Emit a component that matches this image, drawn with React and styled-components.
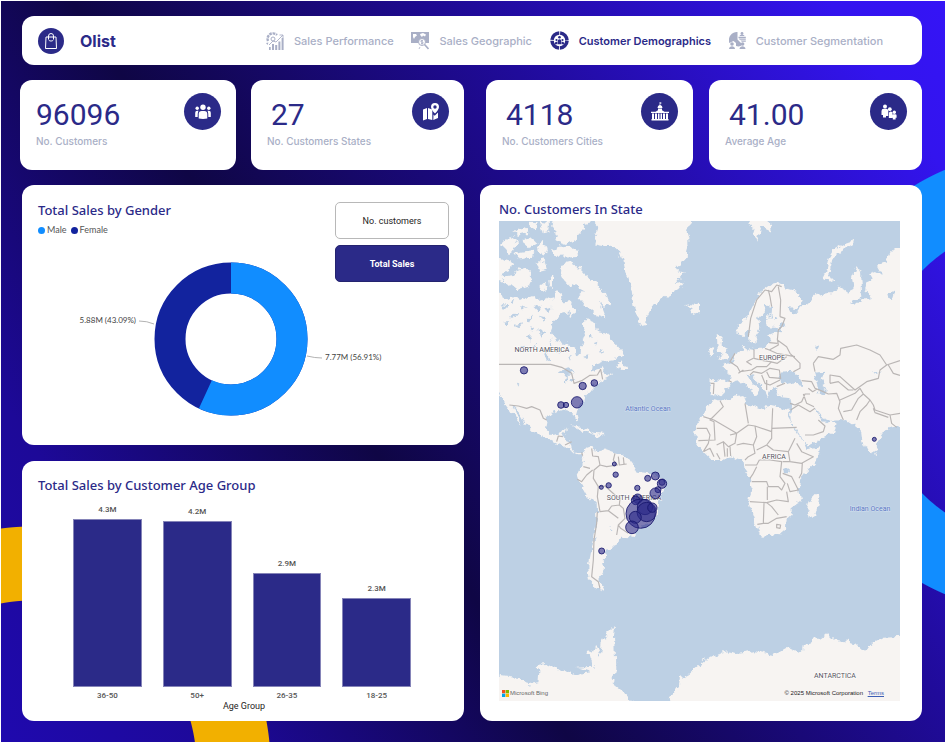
import React, { useState } from "react";
import styled, { createGlobalStyle } from "styled-components";

const navy = "#2b2a88";
const muted = "#a9afc6";

const GlobalStyle = createGlobalStyle`
  * { box-sizing: border-box; }
  body { margin: 0; background: #fff; font-family: Roboto, "Liberation Sans", sans-serif; }
  h1, h2, p, ul { margin: 0; padding: 0; }
`;

const Page = styled.main`
  display: flex;
  flex-direction: column;
  margin: 1px 1px 2px;
  padding: 15px 23px 21px 21px;
  min-height: calc(100vh - 3px);
  background:
    radial-gradient(circle at calc(100% + 90px) 381px, transparent 158px, #118dff 159px, #118dff 230px, transparent 231px),
    radial-gradient(circle at 31px calc(100% + 23px), transparent 164px, #f2b000 165px, #f2b000 238px, transparent 239px),
    linear-gradient(56deg, #1f09ae 0%, #1d0998 16%, #0f0645 39.5%, #200b9a 67%, #3314ee 92%, #3514f6 100%);
`;

const Header = styled.header`
  display: flex;
  align-items: center;
  justify-content: space-between;
  min-height: 49px;
  margin-bottom: 15px;
  padding: 0 39px 0 16px;
  border-radius: 12px;
  background: #fff;
`;

const Brand = styled.div`
  display: flex;
  align-items: center;
  gap: 16px;
`;

const BrandName = styled.h1`
  font: 700 16px/24px Inter, sans-serif;
  color: ${navy};
`;

const Disc = styled.span`
  display: grid;
  place-items: center;
  flex: none;
  width: ${(p) => p.$size}px;
  height: ${(p) => p.$size}px;
  border-radius: 50%;
  background: ${navy};
`;

const Nav = styled.nav`
  display: flex;
  justify-content: space-between;
  flex: 0 1 617px;
`;

const NavLink = styled.a`
  display: flex;
  align-items: center;
  gap: 10px;
  font: ${(p) => (p.$active ? 600 : 500)} 11px/18px Inter, sans-serif;
  color: ${(p) => (p.$active ? navy : muted)};
  text-decoration: none;
  white-space: nowrap;
`;

const Columns = styled.div`
  display: grid;
  grid-template-columns: 1fr 1fr;
  column-gap: 16px;
  flex: ${(p) => (p.$grow ? 1 : "none")};
`;

const StatPair = styled.div`
  display: grid;
  grid-template-columns: ${(p) => p.$columns};
  gap: ${(p) => p.$gap}px;
  margin: 0 0 15px ${(p) => p.$shift}px;
`;

const StatCard = styled.section`
  display: flex;
  justify-content: space-between;
  align-items: flex-start;
  min-height: 90px;
  padding: 13px 15px 13px 16px;
  border-radius: 12px;
  background: #fff;
`;

const StatText = styled.div`
  display: flex;
  flex-direction: column;
  gap: 1px;
  padding-top: 4px;
`;

const StatValue = styled.p`
  padding-left: ${(p) => p.$indent}px;
  font-size: 30px;
  line-height: 36px;
  color: ${navy};
`;

const StatLabel = styled.h2`
  font: 500 10px/14px Inter, sans-serif;
  color: ${muted};
  white-space: nowrap;
`;

const Stack = styled.div`
  display: grid;
  grid-template-rows: 1fr 1fr;
  gap: 16px;
`;

const Panel = styled.section`
  display: flex;
  flex-direction: column;
  min-height: 260px;
  padding: ${(p) => p.$pad || "16px"};
  border-radius: 12px;
  background: #fff;
`;

const GenderPanel = styled.section`
  display: grid;
  min-height: 260px;
  border-radius: 12px;
  background: #fff;
  & > * { grid-area: 1 / 1; }
`;

const PanelTitle = styled.h2`
  font: 500 13px/16px "Noto Sans", "Open Sans", sans-serif;
  color: ${navy};
`;

const GenderTop = styled.div`
  display: flex;
  justify-content: space-between;
  align-items: flex-start;
  align-self: start;
  padding: 17px 15px 0 16px;
  z-index: 1;
`;

const Legend = styled.ul`
  display: flex;
  gap: 4px;
  margin-top: 5px;
  list-style: none;
`;

const LegendItem = styled.li`
  display: flex;
  align-items: center;
  gap: 2px;
  font: 400 9px/14px Lato, sans-serif;
  color: #555;
  &::before {
    content: "";
    width: 7px;
    height: 7px;
    border-radius: 50%;
    background: ${(p) => p.$color};
  }
`;

const Toggles = styled.div`
  display: flex;
  flex-direction: column;
  gap: 6px;
`;

const Toggle = styled.button`
  width: 114px;
  height: 37px;
  padding: 0;
  border: 1px solid ${(p) => (p.$active ? "#24236f" : "#b8b8b8")};
  border-radius: 5px;
  background: ${(p) => (p.$active ? navy : "#fff")};
  color: ${(p) => (p.$active ? "#fff" : "#252423")};
  font: ${(p) => (p.$active ? 700 : 400)} 9px/12px Roboto, sans-serif;
  cursor: pointer;
`;

const Chart = styled.svg`
  display: block;
  width: 100%;
  height: auto;
`;

const Plot = styled.div`
  display: grid;
  grid-template-columns: repeat(4, 1fr);
  gap: 21px;
  flex: 1;
  padding: 12px 37px 0 35px;
`;

const BarColumn = styled.div`
  display: flex;
  flex-direction: column;
  align-items: stretch;
  text-align: center;
  font: 500 8px/12px Roboto, sans-serif;
  color: #555;
`;

const BarTrack = styled.div`
  display: flex;
  flex-direction: column;
  justify-content: flex-end;
  flex: 1;
  padding-top: 14px;
  margin-bottom: 3px;
`;

const BarArea = styled.div`
  display: flex;
  flex-direction: column;
  justify-content: flex-end;
  height: 100%;
`;

const BarValue = styled.span`
  margin: -15px 0 3px;
`;

const Bar = styled.div`
  border: 1px solid #8584b8;
  background: ${navy};
`;

const AxisTitle = styled.p`
  padding-left: 2px;
  text-align: center;
  font-size: 9px;
  line-height: 8px;
  color: #252423;
`;

const MapLabel = styled.text`
  font: 400 7px Roboto, sans-serif;
  fill: ${(p) => (p.$ocean ? "#5b78c4" : "#55525c")};
  stroke: ${(p) => (p.$ocean ? "#d3e0ef" : "#fff")};
  stroke-width: 1px;
  paint-order: stroke;
`;

const MapFrame = styled.figure`
  display: grid;
  margin: 4px 0 0;
  & > * { grid-area: 1 / 1; }
`;

const MapFooter = styled.figcaption`
  display: flex;
  align-items: center;
  justify-content: space-between;
  align-self: end;
  padding: 0 16px 3px 3px;
  font: 400 6px/10px "Liberation Sans", sans-serif;
  color: #222;
  a { margin-left: 3px; color: #3d5fb5; }
`;

const Bing = styled.span`
  display: flex;
  align-items: center;
  gap: 1px;
  color: #666;
`;

/* ---------- icons ---------- */

const BagIcon = () => (
  <svg width="16" height="18" viewBox="0 0 16 18" fill="none" stroke="#fff" strokeWidth="1" aria-hidden="true">
    <path d="M3 5h10l.5 11.500h-11z" />
    <path d="M5.500 7V4a2.500 2.500 0 0 1 5 0v3M5.500 7.500c.5 2 4.500 2 5 0" />
  </svg>
);

const PerformanceIcon = () => (
  <svg width="18" height="18" viewBox="0 0 18 18" fill="currentColor" aria-hidden="true">
    <path d="M2 9a5.500 5.500 0 0 1 9-6" fill="none" stroke="currentColor" strokeWidth="2.400" strokeDasharray="2.600 .8" />
    <path d="m3 13 4-4 3 1 7-7M13.500 3H17v3" fill="none" stroke="currentColor" strokeWidth=".9" />
    <circle cx="7" cy="7" r="2" fill="none" stroke="currentColor" />
    <path d="M3 15h1.700v3H3zM6 12h2v6H6zM9.200 13h2v5h-2zM12.400 9.500h2V18h-2zM15.600 6h2v12h-2zM0 11l2.500-.5-1 2.500z" />
  </svg>
);

const GeographicIcon = () => (
  <svg width="18" height="18" viewBox="0 0 18 18" aria-hidden="true">
    <path d="M0 0h18v11h-3a4 4 0 0 0-7-1l-1 1H0z" fill="currentColor" />
    <path d="M2 2h3l1 1.500-2 1.500-1 2-1-2zM9 2l3-1 3 1.500-1 2-2-1-1 1.500-1.500-1.500z" fill="#fff" />
    <circle cx="11" cy="10" r="3.500" fill="#fff" stroke="currentColor" />
    <path d="m13.500 12.500 4 4.500" stroke="currentColor" strokeWidth="1.600" />
    <path d="M12 8.500h-2v1.500h2v1.500h-2M11 7.800v5M9 15l-1 2" fill="none" stroke="currentColor" strokeWidth=".8" />
  </svg>
);

const DemographicsIcon = () => (
  <svg width="19" height="19" viewBox="0 0 19 19" fill="currentColor" aria-hidden="true">
    <circle cx="9.500" cy="9.500" r="7.500" fill="none" stroke="currentColor" strokeWidth="3.600" strokeDasharray="10.900 .88" strokeDashoffset="-.44" />
    <circle cx="9.500" cy="6.300" r="1.300" />
    <circle cx="6.500" cy="9" r="1.100" />
    <circle cx="12.500" cy="9" r="1.100" />
    <path d="M7.700 10.300a1.800 2 0 0 1 3.600 0v3H7.700zM4.800 12.700a1.700 2 0 0 1 2.500-1.800v2.400H5zM14.200 12.700a1.700 2 0 0 0-2.500-1.800v2.400H14z" />
  </svg>
);

const SegmentationIcon = () => (
  <svg width="17" height="17" viewBox="0 0 17 17" fill="currentColor" aria-hidden="true">
    <path d="M8.500 0v7.500l5 5A6 6 0 0 1 7 14V11L4.500 9 .3 11A8.300 8.300 0 0 1 8.500 0zM9.500 4.700h7.300v1.200H9.500zM9.500 6.500h7.300v1.300h-6zM11.500 8.500h5.300v1.200h-4z" />
    <circle cx="13" cy="1.500" r="1.400" />
    <path d="M10.500 4c.2-1.800 4.800-1.800 5 0z" />
    <circle cx="3" cy="12" r="1.800" />
    <path d="M0 17c.2-3.700 5.800-3.700 6 0z" />
    <circle cx="13.600" cy="12" r="1.800" />
    <path d="M10.500 17c.2-3.700 5.800-3.700 6 0z" />
  </svg>
);

const GroupIcon = () => (
  <svg width="18" height="16" viewBox="0 0 18 16" fill="#fff" aria-hidden="true">
    <circle cx="9" cy="3.200" r="2.700" />
    <circle cx="3.200" cy="4.200" r="1.700" />
    <circle cx="14.800" cy="4.200" r="1.700" />
    <path d="M4.700 14.500v-4.500q0-3 3-3h2.600q3 0 3 3v4.500q-4.300.8-8.600 0zM1.200 13V8.700q0-2 2-2h1.300Q3.600 8 3.700 13zM16.800 13V8.700q0-2-2-2h-1.300q.9 1.300.8 6.300z" />
  </svg>
);

const MapPinIcon = () => (
  <svg width="18" height="18" viewBox="0 0 18 18" fill="#fff" aria-hidden="true">
    <path d="M1 6.500 5 5v11l-4 1.500zM6 5l4.300 1.500V17L6 16zM11.500 11.500l1.200 1.300 3.300-3.300V15l-4.700 2z" />
    <path fillRule="evenodd" d="M13 0a4 4 0 0 1 4 4c0 2-2 4.500-4 6.500C11 8.500 9 6 9 4a4 4 0 0 1 4-4zm0 2.300a1.700 1.700 0 1 0 0 3.400 1.700 1.700 0 0 0 0-3.400z" />
  </svg>
);

const CityHallIcon = () => (
  <svg width="18" height="20" viewBox="0 0 18 20" fill="#fff" aria-hidden="true">
    <path d="M8.600 0 11 1 9.300 1.800V3Q11.500 3.500 11.500 6h-5q0-2.500 2.100-3zM7 6.600h4v1.600l2.500 1.600H18V11H0V9.800h4.500L7 8.200zM1 11.500h2V17H1zM4 11.500h2V17H4zM7 11.500h1.500V17H7zM9.500 11.500H11V17H9.500zM12 11.500h2V17h-2zM15 11.500h2V17h-2zM.5 17h17v1.500H.5z" />
  </svg>
);

const FamilyIcon = () => (
  <svg width="18" height="18" viewBox="0 0 18 18" fill="#fff" aria-hidden="true">
    <circle cx="5" cy="3.500" r="2" />
    <path d="M1.500 8q0-2.300 2.300-2.300h2.500Q8 5.700 8.300 8v5H6v1.500H3V12H1.500z" />
    <circle cx="9.800" cy="6.200" r="1.900" />
    <path d="M9 10q0-1.500 1.700-1.500 1.800 0 1.800 1.500V15H8.800z" />
    <circle cx="14.300" cy="9.200" r="1.700" />
    <path d="M12 12.500q0-1.300 1.500-1.300h1.800q1.300 0 1.300 1.300v2.300h-1v1.700h-2.800v-1.700H12z" />
  </svg>
);

const BingLogo = () => (
  <svg width="7" height="7" viewBox="0 0 7 7" aria-hidden="true">
    <path d="M0 0h3.300v3.300H0z" fill="#f25022" />
    <path d="M3.700 0H7v3.300H3.700z" fill="#7fba00" />
    <path d="M0 3.700h3.300V7H0z" fill="#00a4ef" />
    <path d="M3.700 3.700H7V7H3.700z" fill="#ffb900" />
  </svg>
);

/* ---------- world map ---------- */

const land = [
  // North and Central America
  "M10 300 50 325 75 318 100 330 130 318 150 330 175 322 190 332 200 300 215 310 222 340 245 335 240 365 215 372 190 392 183 430 200 450 235 462 255 475 262 502 272 490 275 460 285 430 275 400 290 388 318 400 325 425 345 430 365 450 385 470 398 490 375 510 340 515 310 528 300 545 335 535 348 562 375 545 350 566 320 580 300 600 287 615 282 638 262 655 258 670 264 692 255 686 246 666 215 662 185 672 170 690 165 715 185 735 215 730 228 712 224 732 215 745 240 755 245 775 255 788 275 788 278 796 262 792 240 780 215 765 195 755 165 740 130 725 105 700 85 665 65 645 78 670 98 708 80 690 55 650 40 630 27 605 10 590Z",
  "M10 200 65 215 58 240 35 250 40 265 75 260 85 232 110 240 128 262 115 290 85 300 60 280 10 262Z",
  "M30 165 60 135 85 150 72 180 55 195 45 180ZM70 125 105 112 112 128 85 135ZM95 150 125 145 140 160 120 172ZM118 98 140 100 138 118 120 114ZM150 95 180 100 178 125 158 130ZM70 192 130 182 125 200 90 205ZM142 170 160 155 170 175 160 200ZM140 215 165 210 170 240 150 245ZM175 265 190 260 188 292 177 285ZM148 290 165 275 172 300 155 305Z",
  "M190 80H305L268 128 258 152 225 162 190 150 200 125 183 108ZM183 178 215 168 262 176 264 198 205 200ZM212 222 240 215 262 228 282 250 312 275 347 310 360 345 338 350 326 332 347 388 320 378 282 345 262 320 285 300 252 282 240 290 222 270 210 245ZM232 350 245 345 262 362 240 378ZM380 530 394 508 413 540 395 540ZM243 705 275 712 310 728 285 726ZM310 728 345 732 330 740 305 736Z",
  // Greenland and Iceland
  "M295 80 325 110 315 140 310 160 340 165 365 165 385 185 400 210 405 240 415 275 425 300 430 345 440 385 455 408 468 405 472 375 485 350 500 345 530 318 565 297 582 275 552 285 585 245 555 240 590 200 596 160 590 130 604 80ZM585 345 605 355 598 365 615 377 632 360 625 345 605 343Z",
  // Europe and Asia
  "M1250 170 1205 185 1190 215 1160 225 1178 258 1155 240 1140 245 1152 268 1130 275 1125 302 1147 322 1120 325 1105 342 1080 335 1108 325 1116 300 1113 240 1095 230 1085 262 1090 290 1080 310 1060 295 1045 290 1035 310 1010 310 980 315 960 332 940 345 920 368 905 370 890 350 920 355 938 335 930 315 905 300 885 295 870 277 845 280 825 295 805 310 790 345 770 385 745 405 740 430 760 435 775 420 780 455 795 462 801 435 808 410 805 385 820 365 825 345 847 350 845 370 830 385 835 412 865 415 882 400 886 410 860 425 835 435 845 455 830 460 825 475 795 478 780 475 765 480 760 462 755 480 740 490 725 512 695 525 705 545 720 550 716 572 690 572 662 570 660 612 675 622 695 615 715 590 740 575 760 572 770 590 800 615 810 600 780 570 768 550 787 557 812 582 825 600 835 622 845 597 862 590 860 610 875 622 902 625 906 655 900 672 902 690 920 720 942 755 955 768 990 750 1030 728 1040 704 1020 690 1005 700 990 680 975 652 1000 682 1025 692 1070 690 1085 700 1100 698 1096 712 1115 720 1120 755 1135 785 1142 790 1158 780 1163 755 1180 730 1200 710 1250 702Z",
  "M680 435 695 440 692 460 710 480 716 500 685 510 694 492 683 475ZM658 480 670 470 676 490 660 500ZM1092 148 1070 155 1030 180 1015 205 1008 240 998 262 1022 276 1030 270 1018 250 1026 215 1042 190 1072 172 1090 162ZM775 80H838L842 122 815 110 802 155 790 120ZM1154 785 1162 800 1158 800Z",
  // Africa and Madagascar
  "M675 627 690 632 730 620 760 615 770 640 795 650 820 660 830 645 860 652 895 660 894 682 916 720 940 755 950 778 992 772 980 810 955 840 930 870 927 895 933 930 905 950 905 975 890 990 888 1015 865 1035 815 1040 800 1000 777 935 785 895 780 868 765 845 760 812 740 805 725 798 690 810 665 810 640 785 618 758 615 710 635 680 658 640ZM982 910 988 925 975 975 960 985 952 960 958 935Z",
  // South America
  "M275 795 290 775 310 768 308 785 340 778 375 790 415 805 430 825 440 842 470 845 500 858 525 880 520 905 505 930 500 980 480 1000 450 1012 432 1030 415 1042 390 1040 385 1060 365 1075 345 1085 350 1100 335 1120 345 1135 325 1170 342 1203 320 1195 300 1170 295 1130 305 1080 315 1030 322 980 320 940 290 915 265 870 260 855 270 835 280 810Z",
  // Antarctica
  "M10 1455 60 1462 95 1465 110 1485 145 1480 148 1445 137 1425 170 1422 200 1435 230 1445 260 1457 275 1450 300 1447 262 1433 308 1430 305 1410 290 1390 320 1372 330 1400 335 1360 355 1325 375 1305 372 1340 376 1430 368 1480 400 1505 445 1555H10ZM520 1555 565 1495 570 1465 600 1450 660 1400 710 1387 740 1392 795 1383 850 1395 895 1370 925 1385 960 1355 990 1345 1010 1328 1030 1348 1095 1360 1125 1385 1150 1355 1180 1340 1250 1337V1555Z",
];

const water = [
  "M868 548 905 545 930 560 942 585 900 580 870 586ZM972 545 1005 542 995 570 1010 600 1004 618 985 610 980 575ZM205 545 232 535 255 548 230 552 232 580 222 575 225 552ZM240 560 262 572 245 580ZM157 478 165 480 182 515 170 510ZM107 440 122 435 118 455ZM60 378 90 368 75 385ZM35 345 55 350 45 360ZM880 838 895 832 898 850 882 850ZM1195 310 1215 305 1208 328 1198 325ZM975 465 990 462 982 480ZM1145 545 1180 540 1160 548ZM90 345 110 350 100 358ZM110 385 130 375 120 395ZM145 415 168 425 150 440ZM130 350 155 348 142 362ZM40 395 65 392 50 405ZM355 1012 365 1015 360 1018ZM300 430 312 445 300 450ZM330 475 345 480 332 485ZM840 378 850 372 846 384ZM858 375 865 382 858 390Z",
  "M165 355 185 350 172 366ZM75 405 98 400 85 415ZM150 380 168 385 158 395ZM130 465 142 462 138 480ZM195 485 215 482 202 492ZM95 475 105 470 102 485ZM280 500 298 495 288 508ZM310 460 322 455 318 470ZM235 500 245 498 240 512ZM60 335 72 332 68 345ZM180 440 184 465 190 470ZM120 415 136 408 130 425ZM82 678 88 672 86 682ZM80 580 88 584 84 590Z",
];

const borders = [
  "M27 523H182L215 532 245 550 252 580 275 572 300 556 322 555 332 538 338 568M58 645 85 648 110 655 125 650 150 660 160 685 170 690M200 755 205 738 218 740M225 765 245 755M275 787 278 797",
  // South America
  "M305 775 308 798 325 800 330 825 312 840 310 865 325 890 345 888 375 915 390 925 388 945 400 955 405 985 385 1005 392 1015 415 1030M262 868 275 875 290 855 308 840M280 830 300 835M325 890 322 920 330 965 355 962 365 948 388 945M322 965 320 1000 312 1050 310 1110 305 1160 325 1175 330 1195M375 790 370 810 382 825 350 830 330 825M385 800 388 825 410 822M400 802 402 822M355 962 385 985M385 1005 380 1035",
  // Africa
  "M640 785 655 760 660 735 650 715 620 715M672 690 640 680M690 632 700 650 660 690 672 695 675 750 625 752M672 690 740 730 775 705 795 708 845 725 848 655M765 640 775 700M720 735 740 730 735 760 715 770 700 755 680 765M795 708 800 740 790 765 760 760 740 765M845 715 920 712M845 725 845 745 830 765 850 780 895 785 915 745M790 765 795 790 775 800 765 810M800 780 830 765M808 810 840 810 875 815 870 860 885 880 875 900 865 890 835 890 830 875 785 875M895 785 900 815 878 815M920 760 935 785 970 800 935 820 900 815M937 820 935 850 927 865M878 850 905 860 925 900 900 905 892 880M780 935 830 938 860 930 895 935 890 905M832 890 832 930M822 940 820 1000 835 1000 860 985 890 980M802 1003 820 1000M830 938 845 950 865 975M860 1003 872 1005 870 1015 860 1013ZM800 830 790 850 780 865M680 790 690 808M700 755 705 800M712 775 712 800M720 770 722 798M640 785 660 775 672 800M765 825 800 825 808 810",
  // Middle East and Asia
  "M900 640 915 645 935 635 945 612 960 612M902 660 925 645 960 665 975 655M940 612 950 640 972 650M945 735 970 735 1000 725 1005 708 985 690M860 590 885 580M935 572 965 575 975 595 1000 605 1015 612 1040 610 1050 635 1045 655 1060 690M955 595 968 605 980 598M970 520 985 500 1030 508 1050 495 1052 475 1100 465 1140 480 1170 495 1190 525 1230 512M970 520 975 545M1020 580V555L1050 560 1095 600 1130 575 1165 565 1170 540 1190 525M1020 580 1045 575 1075 600 1090 600M1050 630 1095 610 1110 595 1120 612M1060 665 1085 660 1105 625 1120 612 1140 630M1100 690 1110 665 1130 645 1140 630 1150 645 1155 660 1200 675 1230 670M1150 655 1155 668 1195 682M1200 675 1205 700 1220 712M1195 525 1210 550 1230 556",
  // Europe
  "M775 440 782 385 800 330 825 300 845 305 860 285 875 290M845 350 840 320 835 300M870 380 885 385 875 410 865 420 862 450 890 470 900 490 930 520 930 535 910 545M870 380 872 330 865 290M825 475 838 480 865 465 862 445M838 458 862 460M792 478 792 505 820 512 840 515 862 520 890 500M735 490 720 515 742 530 750 545 785 540 800 530 830 530 845 515M662 580 672 580 670 612M716 572 725 576M780 555 790 545 815 550 840 535 868 540 872 565 838 562 830 545M815 555 825 580 840 585 870 570M830 570 830 600M790 505 770 515 785 525M760 540 745 550M915 500 860 490 838 480",
];

const customers = [
  [102, 541, 11], [278, 588, 11], [313, 579, 10], [213, 645, 10], [228, 645, 8], [261, 637, 17],
  [373, 822, 6], [377, 854, 8], [334, 892, 6], [356, 886, 8], [442, 894, 8], [473, 865, 9], [496, 858, 12],
  [516, 877, 9], [516, 881, 14], [504, 899, 9], [496, 910, 16], [443, 926, 14], [437, 931, 13],
  [452, 971, 44], [465, 951, 23], [470, 966, 29], [487, 953, 14], [436, 982, 18], [426, 1012, 19],
  [335, 1083, 9], [1153, 748, 6],
];

function WorldMap() {
  return (
    <Chart viewBox="0 0 401 480" role="img" aria-label="Customers on a world map">
      <defs>
        <filter id="coast" x="-5%" y="-5%" width="110%" height="110%">
          <feTurbulence type="fractalNoise" baseFrequency="0.15" numOctaves="3" seed="4" />
          <feDisplacementMap in="SourceGraphic" scale="8" xChannelSelector="R" yChannelSelector="G" />
        </filter>
      </defs>
      <rect width="401" height="480" fill="#bdd0e4" />
      <g filter="url(#coast)">
        <g transform="scale(.33333) translate(-27 -93)">
          {land.map((d) => <path key={d} d={d} fill="#f7f4f2" />)}
          {water.map((d) => <path key={d} d={d} fill="#bdd0e4" />)}
        </g>
      </g>
      <g transform="scale(.33333) translate(-27 -93)">
        {borders.map((d) => <path key={d} d={d} fill="none" stroke="#bab6b5" strokeWidth="3.500" strokeLinejoin="round" />)}
      </g>
      <g textAnchor="middle">
        <MapLabel x="43" y="131">NORTH AMERICA</MapLabel>
        <MapLabel x="273" y="139">EUROPE</MapLabel>
        <MapLabel x="275" y="238">AFRICA</MapLabel>
        <MapLabel x="135" y="279">SOUTH AMERICA</MapLabel>
        <MapLabel x="336" y="457">ANTARCTICA</MapLabel>
        <MapLabel $ocean x="149" y="190">Atlantic Ocean</MapLabel>
        <MapLabel $ocean x="371" y="290">Indian Ocean</MapLabel>
      </g>
      <g transform="scale(.33333) translate(-27 -93)" fill={navy} fillOpacity=".6" stroke="#15146b" strokeWidth="2.500">
        {customers.map(([x, y, r]) => <circle key={`${x}-${y}`} cx={x} cy={y} r={r} />)}
      </g>
    </Chart>
  );
}

/* ---------- charts ---------- */

const DonutLabel = styled.text`
  font: 400 8px Lato, sans-serif;
  fill: #444;
`;

function GenderDonut() {
  const share = 56.91;
  return (
    <Chart viewBox="0 0 442 260" role="img" aria-label="Total sales by gender">
      <g fill="none" strokeWidth="31" transform="rotate(-90 209 154)">
        <circle cx="209" cy="154" r="61" stroke="#12239e" />
        <circle cx="209" cy="154" r="61" stroke="#118dff" pathLength="100" strokeDasharray={`${share} ${100 - share}`} />
      </g>
      <path d="M117 136q8 0 15 3M285 171q8 2 15 2" fill="none" stroke="#b3b3b3" />
      <DonutLabel x="114" y="138" textAnchor="end">5.88M (43.09%)</DonutLabel>
      <DonutLabel x="303" y="175">7.77M (56.91%)</DonutLabel>
    </Chart>
  );
}

const ages = [
  { group: "36-50", label: "4.3M", share: 100 },
  { group: "50+", label: "4.2M", share: 99 },
  { group: "26-35", label: "2.9M", share: 68 },
  { group: "18-25", label: "2.3M", share: 53 },
];

const links = [
  { name: "Sales Performance", Icon: PerformanceIcon },
  { name: "Sales Geographic", Icon: GeographicIcon },
  { name: "Customer Demographics", Icon: DemographicsIcon, active: true },
  { name: "Customer Segmentation", Icon: SegmentationIcon },
];

function Stat({ value, label, indent = 4, Icon }) {
  return (
    <StatCard>
      <StatText>
        <StatValue $indent={indent}>{value}</StatValue>
        <StatLabel>{label}</StatLabel>
      </StatText>
      <Disc $size={37}><Icon /></Disc>
    </StatCard>
  );
}

export default function App() {
  const [measure, setMeasure] = useState("Total Sales");
  return (
    <>
      <GlobalStyle />
      <Page>
        <Header>
          <Brand>
            <Disc $size={26}><BagIcon /></Disc>
            <BrandName>Olist</BrandName>
          </Brand>
          <Nav>
            {links.map(({ name, Icon, active }) => (
              <NavLink key={name} href="#" $active={active} aria-current={active ? "page" : undefined}>
                <Icon />
                {name}
              </NavLink>
            ))}
          </Nav>
        </Header>

        <Columns>
          <StatPair $columns="216fr 213fr" $gap={15} $shift={-2}>
            <Stat value="96096" label="No. Customers" indent={0} Icon={GroupIcon} />
            <Stat value="27" label="No. Customers States" Icon={MapPinIcon} />
          </StatPair>
          <StatPair $columns="207fr 213fr" $gap={16} $shift={6}>
            <Stat value="4118" label="No. Customers Cities" Icon={CityHallIcon} />
            <Stat value="41.00" label="Average Age" Icon={FamilyIcon} />
          </StatPair>
        </Columns>

        <Columns $grow>
          <Stack>
            <GenderPanel>
              <GenderDonut />
              <GenderTop>
                <div>
                  <PanelTitle>Total Sales by Gender</PanelTitle>
                  <Legend>
                    <LegendItem $color="#118dff">Male</LegendItem>
                    <LegendItem $color="#12239e">Female</LegendItem>
                  </Legend>
                </div>
                <Toggles>
                  {["No. customers", "Total Sales"].map((name) => (
                    <Toggle
                      key={name}
                      type="button"
                      $active={measure === name}
                      aria-pressed={measure === name}
                      onClick={() => setMeasure(name)}
                    >
                      {name}
                    </Toggle>
                  ))}
                </Toggles>
              </GenderTop>
            </GenderPanel>

            <Panel $pad="16px 16px 11px">
              <PanelTitle>Total Sales by Customer Age Group</PanelTitle>
              <Plot>
                {ages.map((a) => (
                  <BarColumn key={a.group}>
                    <BarTrack>
                      <BarArea>
                        <BarValue>{a.label}</BarValue>
                        <Bar style={{ height: `${a.share}%` }} />
                      </BarArea>
                    </BarTrack>
                    {a.group}
                  </BarColumn>
                ))}
              </Plot>
              <AxisTitle>Age Group</AxisTitle>
            </Panel>
          </Stack>

          <Panel $pad="16px 22px 20px 19px">
            <PanelTitle>No. Customers In State</PanelTitle>
            <MapFrame>
              <WorldMap />
              <MapFooter>
                <Bing><BingLogo />Microsoft Bing</Bing>
                <span>© 2025 Microsoft Corporation <a href="#">Terms</a></span>
              </MapFooter>
            </MapFrame>
          </Panel>
        </Columns>
      </Page>
    </>
  );
}
